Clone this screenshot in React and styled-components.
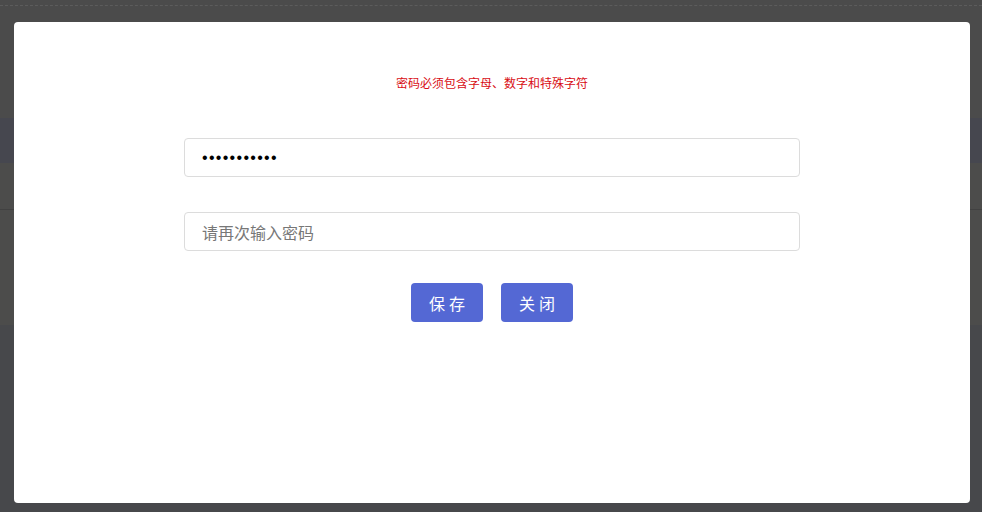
import React from "react";
import styled, { createGlobalStyle } from "styled-components";

const GlobalStyle = createGlobalStyle`
  html, body {
    margin: 0;
    padding: 0;
    height: 100%;
    background: #47484b;
    font-family: "Noto Sans CJK SC", "Noto Sans", sans-serif;
  }
  #root {
    height: 100%;
  }
`;

const Page = styled.div`
  height: 512px;
  overflow: hidden;
  position: relative;
  background: #47484b;
`;

const Header = styled.div`
  height: 118px;
  background: #4b4b4b;
  .line {
    height: 5px;
    border-bottom: 1px dashed #5c5c5c;
  }
`;

const NavBand = styled.div`
  height: 45px;
  background: #46474f;
`;

const Row = styled.div`
  height: 46px;
  background: #4c4c4b;
  border-bottom: 1px solid #414141;
`;

const Section = styled.div`
  height: 115px;
  background: #4c4c4b;
`;

const Overlay = styled.div`
  position: absolute;
  inset: 0;
  display: flex;
  padding: 22px 12px 9px 14px;
  box-sizing: border-box;
`;

const Modal = styled.div`
  flex: 1;
  background: #fff;
  border-radius: 4px;
  display: flex;
  flex-direction: column;
  align-items: center;
  padding-top: 54px;
`;

const Tip = styled.p`
  margin: 0;
  font-size: 12px;
  line-height: 14px;
  color: #d80d14;
`;

const Form = styled.form`
  width: 616px;
  margin-top: 48px;
  display: flex;
  flex-direction: column;
  gap: 35px;
`;

const Input = styled.input`
  height: 39px;
  box-sizing: border-box;
  border: 1px solid #dcdcdc;
  border-radius: 4px;
  padding: 0 17px;
  font-size: 16px;
  font-family: ${(p) =>
    p.type === "password" && p.defaultValue
      ? '"Liberation Sans", Arial, sans-serif'
      : '"Noto Sans CJK SC", "Noto Sans", sans-serif'};
  letter-spacing: ${(p) => (p.defaultValue ? "1.3px" : "0")};
  color: #000;
  outline: none;
  &::placeholder {
    color: #777;
    letter-spacing: 0;
  }
`;

const Actions = styled.div`
  display: flex;
  justify-content: center;
  gap: 18px;
  margin-top: -3px;
`;

const Button = styled.button`
  width: 72px;
  height: 39px;
  border: none;
  border-radius: 4px;
  background: #5468d4;
  color: #fff;
  font-size: 16px;
  letter-spacing: 4px;
  padding: 0 0 0 4px;
  font-family: "Noto Sans CJK SC", "Noto Sans", sans-serif;
  cursor: pointer;
`;

export default function App() {
  return (
    <Page>
      <GlobalStyle />
      <Header>
        <div className="line" />
      </Header>
      <NavBand />
      <Row />
      <Section />
      <Overlay>
        <Modal>
          <Tip>密码必须包含字母、数字和特殊字符</Tip>
          <Form onSubmit={(e) => e.preventDefault()}>
            <Input type="password" defaultValue="abc12345678" />
            <Input type="password" placeholder="请再次输入密码" />
            <Actions>
              <Button type="submit">保存</Button>
              <Button type="button">关闭</Button>
            </Actions>
          </Form>
        </Modal>
      </Overlay>
    </Page>
  );
}
